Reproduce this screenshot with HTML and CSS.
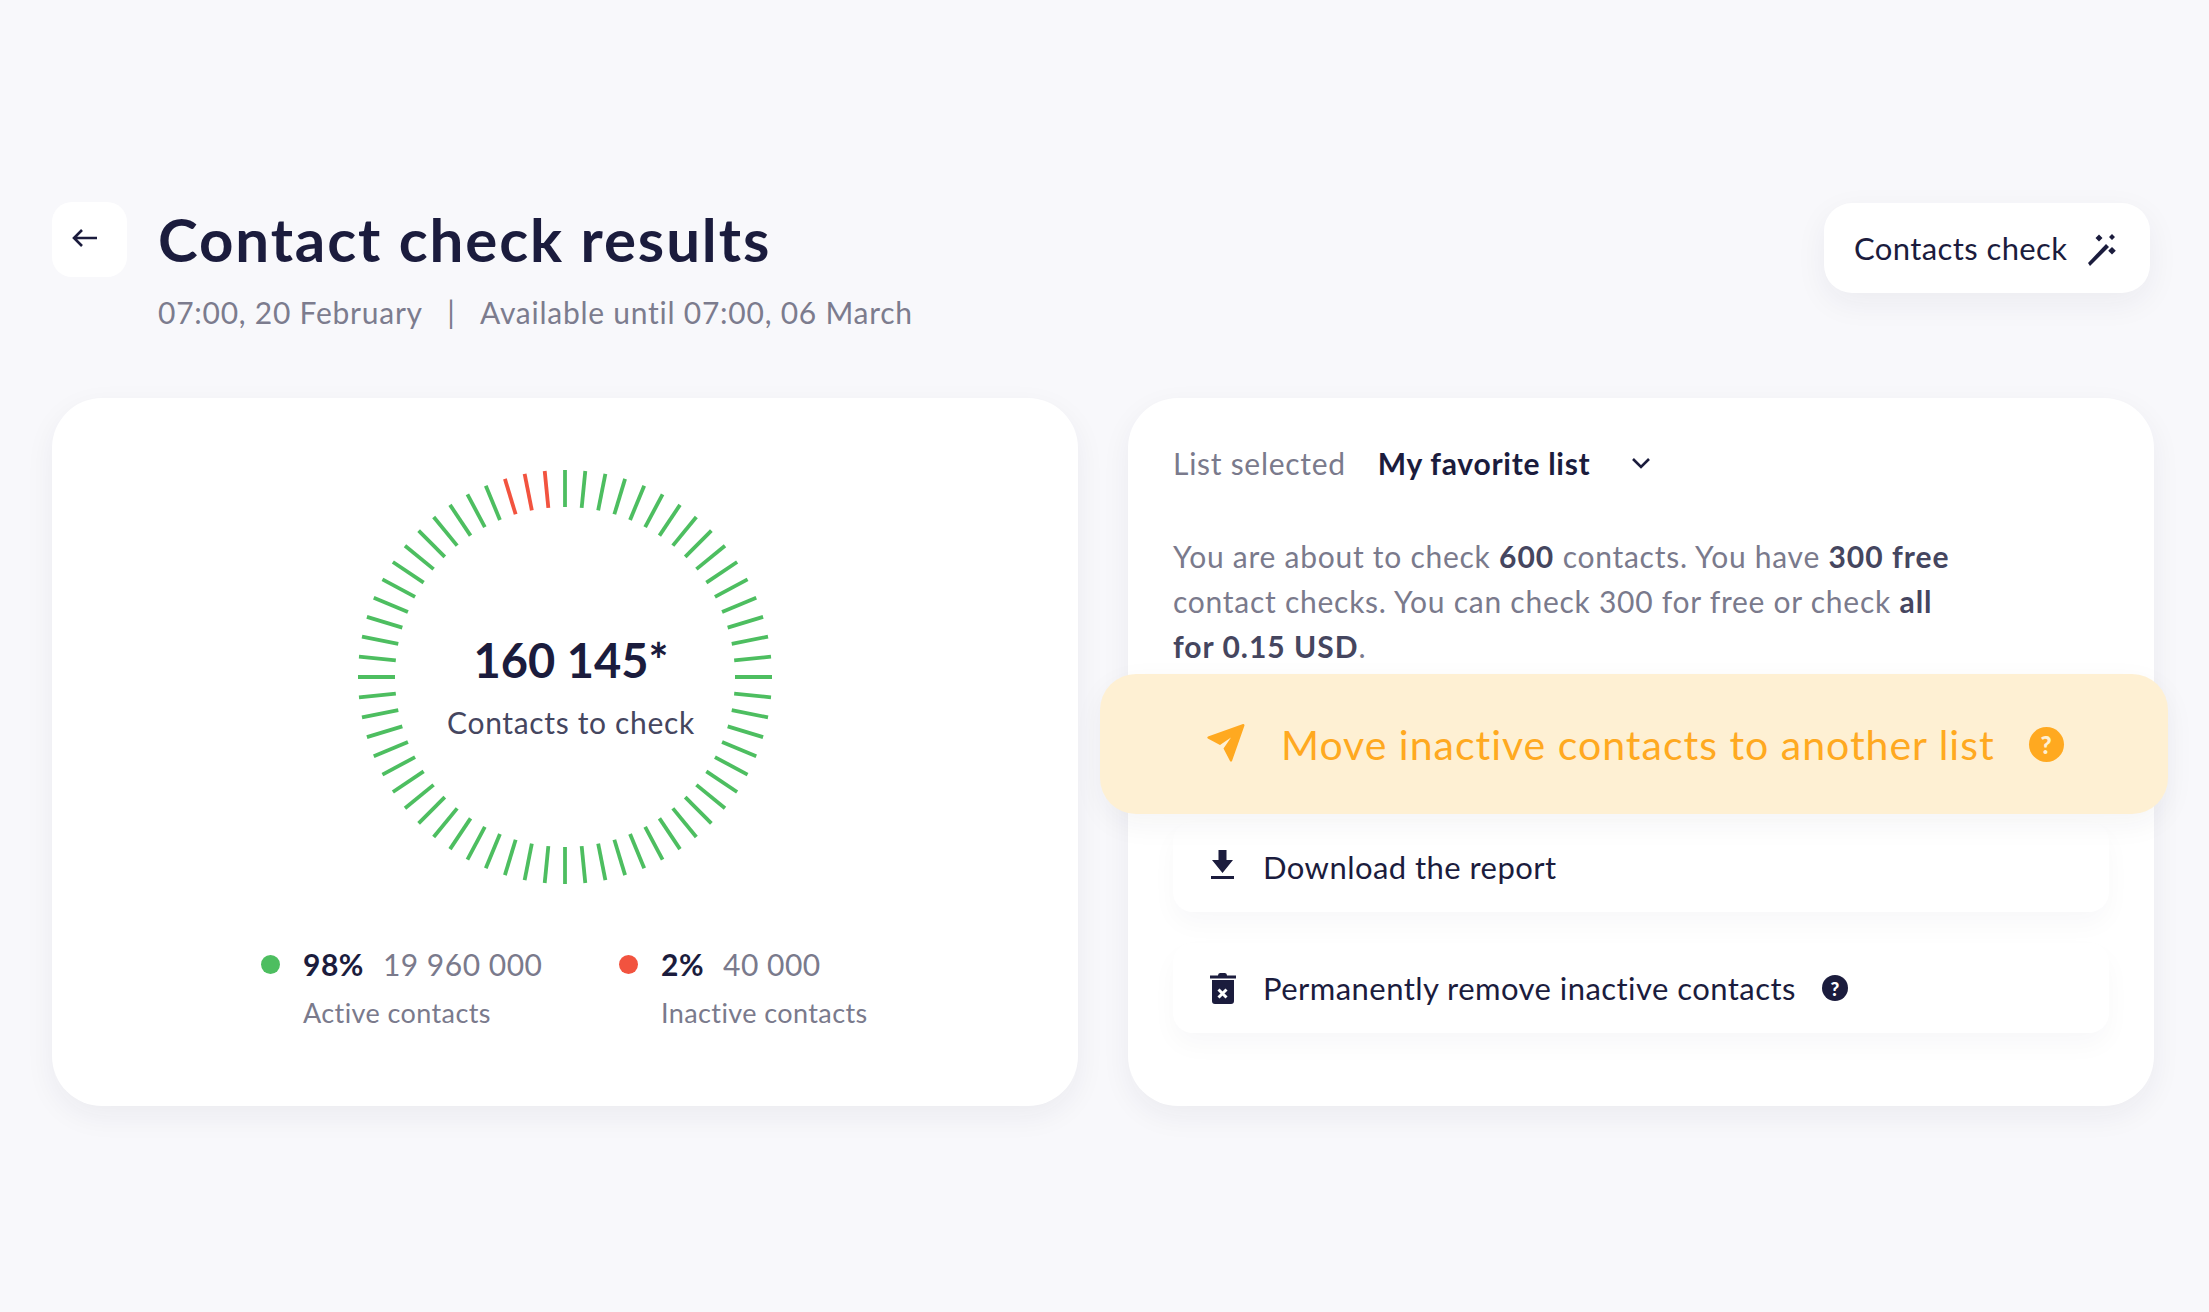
FILE: index.html
```html
<!DOCTYPE html>
<html lang="en">

<head>
    <meta charset="UTF-8">
    <title>Contact check results</title>
    <link rel="stylesheet" href="styles.css">
</head>

<body>
    <div class="page-head">
        <button class="back-btn">
            <svg width="26" height="20" viewBox="0 0 26 20"><path class="line-icon" d="M25 10H2M10 2l-8 8 8 8"/></svg>
        </button>
        <div class="title-box">
            <h1>Contact check results</h1>
            <p class="subtitle">07:00, 20 February<span class="sep">|</span>Available until 07:00, 06 March</p>
        </div>
        <button class="check-btn">
            Contacts check
            <svg width="45" height="45" viewBox="0 0 45 45">
                <path class="fill-dark" d="M8 37l18-19 3 3-19 19z"/>
                <path class="fill-dark" d="M19 8.500l3.500 3.500-3.500 3.500-3.500-3.500zM32 8l3 3-3 3-3-3zM32 21l3.800 3.800-3.800 3.800-3.800-3.800z"/>
            </svg>
        </button>
    </div>

    <div class="cards">
        <div class="card ring-card">
            <div class="ring-wrap">
                <svg class="ring" width="420" height="420" viewBox="-210 -210 420 420">
                    <defs><line id="tick" x1="0" y1="-207" x2="0" y2="-170"/></defs>
                    <g class="ticks-green">
                        <use href="#tick"/>
                        <use href="#tick" transform="rotate(5.625)"/>
                        <use href="#tick" transform="rotate(11.25)"/>
                        <use href="#tick" transform="rotate(16.875)"/>
                        <use href="#tick" transform="rotate(22.5)"/>
                        <use href="#tick" transform="rotate(28.125)"/>
                        <use href="#tick" transform="rotate(33.75)"/>
                        <use href="#tick" transform="rotate(39.375)"/>
                        <use href="#tick" transform="rotate(45)"/>
                        <use href="#tick" transform="rotate(50.625)"/>
                        <use href="#tick" transform="rotate(56.25)"/>
                        <use href="#tick" transform="rotate(61.875)"/>
                        <use href="#tick" transform="rotate(67.5)"/>
                        <use href="#tick" transform="rotate(73.125)"/>
                        <use href="#tick" transform="rotate(78.75)"/>
                        <use href="#tick" transform="rotate(84.375)"/>
                        <use href="#tick" transform="rotate(90)"/>
                        <use href="#tick" transform="rotate(95.625)"/>
                        <use href="#tick" transform="rotate(101.25)"/>
                        <use href="#tick" transform="rotate(106.875)"/>
                        <use href="#tick" transform="rotate(112.5)"/>
                        <use href="#tick" transform="rotate(118.125)"/>
                        <use href="#tick" transform="rotate(123.75)"/>
                        <use href="#tick" transform="rotate(129.375)"/>
                        <use href="#tick" transform="rotate(135)"/>
                        <use href="#tick" transform="rotate(140.625)"/>
                        <use href="#tick" transform="rotate(146.25)"/>
                        <use href="#tick" transform="rotate(151.875)"/>
                        <use href="#tick" transform="rotate(157.5)"/>
                        <use href="#tick" transform="rotate(163.125)"/>
                        <use href="#tick" transform="rotate(168.75)"/>
                        <use href="#tick" transform="rotate(174.375)"/>
                        <use href="#tick" transform="rotate(180)"/>
                        <use href="#tick" transform="rotate(185.625)"/>
                        <use href="#tick" transform="rotate(191.25)"/>
                        <use href="#tick" transform="rotate(196.875)"/>
                        <use href="#tick" transform="rotate(202.5)"/>
                        <use href="#tick" transform="rotate(208.125)"/>
                        <use href="#tick" transform="rotate(213.75)"/>
                        <use href="#tick" transform="rotate(219.375)"/>
                        <use href="#tick" transform="rotate(225)"/>
                        <use href="#tick" transform="rotate(230.625)"/>
                        <use href="#tick" transform="rotate(236.25)"/>
                        <use href="#tick" transform="rotate(241.875)"/>
                        <use href="#tick" transform="rotate(247.5)"/>
                        <use href="#tick" transform="rotate(253.125)"/>
                        <use href="#tick" transform="rotate(258.75)"/>
                        <use href="#tick" transform="rotate(264.375)"/>
                        <use href="#tick" transform="rotate(270)"/>
                        <use href="#tick" transform="rotate(275.625)"/>
                        <use href="#tick" transform="rotate(281.25)"/>
                        <use href="#tick" transform="rotate(286.875)"/>
                        <use href="#tick" transform="rotate(292.5)"/>
                        <use href="#tick" transform="rotate(298.125)"/>
                        <use href="#tick" transform="rotate(303.75)"/>
                        <use href="#tick" transform="rotate(309.375)"/>
                        <use href="#tick" transform="rotate(315)"/>
                        <use href="#tick" transform="rotate(320.625)"/>
                        <use href="#tick" transform="rotate(326.25)"/>
                        <use href="#tick" transform="rotate(331.875)"/>
                        <use href="#tick" transform="rotate(337.5)"/>
                    </g>
                    <g class="ticks-red">
                        <use href="#tick" transform="rotate(343.125)"/>
                        <use href="#tick" transform="rotate(348.75)"/>
                        <use href="#tick" transform="rotate(354.375)"/>
                    </g>
                </svg>
                <div class="ring-label">
                    <div class="ring-count">160 145*</div>
                    <div class="ring-text">Contacts to check</div>
                </div>
            </div>
            <div class="legend">
                <div class="legend-item">
                    <span class="dot dot-green"></span>
                    <div>
                        <div class="legend-top"><b>98%</b><span>19 960 000</span></div>
                        <div class="legend-name">Active contacts</div>
                    </div>
                </div>
                <div class="legend-item">
                    <span class="dot dot-red"></span>
                    <div>
                        <div class="legend-top"><b>2%</b><span>40 000</span></div>
                        <div class="legend-name">Inactive contacts</div>
                    </div>
                </div>
            </div>
        </div>

        <div class="card action-card">
            <div class="list-row">
                <span class="list-label">List selected</span>
                <span class="list-name">My favorite list</span>
                <svg width="22" height="14" viewBox="0 0 22 14"><path class="line-icon" d="M3 3l8 8 8-8"/></svg>
            </div>
            <p class="summary">You are about to check <b>600</b> contacts. You have <b>300 free</b><br>contact checks. You can check 300 for free or check <b>all</b><br><b>for 0.15 USD</b>.</p>
            <div class="move-banner">
                <svg width="60" height="60" viewBox="0 0 60 60">
                    <path class="fill-orange" d="M48 10L13 22.500q-1.500 1-.2 2L25 31l11-7.500-7.500 11L35 47q1 1.500 2 0l12.500-35.500q0-2-1.500-1.500z"/>
                </svg>
                <span>Move inactive contacts to another list</span>
                <span class="help help-orange">?</span>
            </div>
            <div class="action-row">
                <svg width="45" height="45" viewBox="0 0 45 45">
                    <path class="fill-dark" d="M18.500 5h8v10H33L22.500 28 12 15h6.500zM11 31h23v3H11z"/>
                </svg>
                <span>Download the report</span>
            </div>
            <div class="action-row">
                <svg width="45" height="45" viewBox="0 0 45 45">
                    <path class="fill-dark" d="M18 9.500q0-2.500 2-2.500h5q2 0 2 2.500h9v3H10v-3zM12 14h22v21q0 3-3 3H15q-3 0-3-3z"/>
                    <path class="cross" d="M18.500 23.500l8 8M26.500 23.500l-8 8"/>
                </svg>
                <span>Permanently remove inactive contacts</span>
                <span class="help help-dark">?</span>
            </div>
        </div>
    </div>
</body>

</html>
```

FILE: styles.css
```css
* {
    box-sizing: border-box;
}

body {
    margin: 0;
    min-height: 100vh;
    padding: 202px 55px 0 52px;
    background: #f8f8fb;
    color: #1b1c3d;
    font-family: 'Lato', 'Open Sans', sans-serif;
}

button {
    border: 0;
    background: #fff;
    color: inherit;
    font: inherit;
}

.line-icon {
    fill: none;
    stroke: #1b1c3d;
    stroke-width: 2.6;
}

.fill-dark {
    fill: #1b1c3d;
}

.fill-orange {
    fill: #ffa920;
}

.cross {
    fill: none;
    stroke: #fff;
    stroke-width: 3;
}

/* header */
.page-head {
    display: flex;
    align-items: flex-start;
    margin-bottom: 64px;
}

.back-btn {
    width: 75px;
    height: 75px;
    border-radius: 20px;
    padding: 0 9px 4px 0;
    margin-right: 31px;
    display: flex;
    align-items: center;
    justify-content: center;
}

.title-box {
    flex: 1;
    margin-top: -1px;
}

h1 {
    margin: 0;
    font-size: 60px;
    line-height: 76px;
    font-weight: 700;
    letter-spacing: 1.9px;
}

.subtitle {
    margin: 13px 0 0;
    font-size: 30px;
    line-height: 44px;
    color: #7c7c8e;
    letter-spacing: 0.75px;
}

.sep {
    margin: 0 24.500px;
}

.check-btn {
    width: 326px;
    height: 90px;
    margin: 1px 4px 0 0;
    padding: 0 25px 0 30px;
    border-radius: 28px;
    font-size: 31px;
    letter-spacing: 0.4px;
    display: flex;
    align-items: center;
    justify-content: space-between;
    box-shadow: 0 10px 32px rgba(30, 30, 60, 0.06);
}

/* cards */
.cards {
    display: grid;
    grid-template-columns: 1026px 1026px;
    gap: 50px;
}

.card {
    height: 708px;
    background: #fff;
    border-radius: 50px;
    box-shadow: 0 10px 30px rgba(30, 30, 60, 0.06);
}

.ring-card {
    padding-top: 69px;
}

.ring-wrap {
    position: relative;
    width: 420px;
    height: 420px;
    margin: 0 auto;
}

.ring {
    display: block;
}

.ticks-green {
    stroke: #4dbe60;
    stroke-width: 3.8;
}

.ticks-red {
    stroke: #f2533f;
    stroke-width: 3.8;
}

.ring-label {
    position: absolute;
    inset: 0;
    padding: 26px 0 0 12px;
    display: flex;
    flex-direction: column;
    align-items: center;
    justify-content: center;
}

.ring-count {
    font-size: 47px;
    line-height: 56px;
    font-weight: 700;
    margin-top: -7px;
}

.ring-text {
    font-size: 30px;
    line-height: 40px;
    color: #45465f;
    margin-top: 14px;
    letter-spacing: 0.66px;
}

.legend {
    display: grid;
    grid-template-columns: 358px auto;
    margin: 57px 0 0 209px;
}

.legend-item {
    display: flex;
    align-items: flex-start;
    gap: 23px;
}

.dot {
    width: 19px;
    height: 19px;
    margin-top: 11px;
    border-radius: 50%;
}

.dot-green {
    background: #4dbe60;
}

.dot-red {
    background: #f2533f;
}

.legend-top {
    display: flex;
    gap: 19px;
    font-size: 30px;
    line-height: 40px;
    color: #7a7a8c;
    letter-spacing: 0.5px;
}

.legend-top b {
    color: #1b1c3d;
    font-weight: 700;
}

.legend-name {
    margin-top: 9px;
    font-size: 27px;
    line-height: 40px;
    color: #7a7a8c;
    letter-spacing: 0.4px;
}

.action-card {
    padding: 45px 45px 0;
}

.list-row {
    display: flex;
    align-items: center;
    height: 40px;
    font-size: 30px;
    letter-spacing: 0.72px;
}

.list-label {
    color: #7a7a8c;
    margin-right: 32px;
}

.list-name {
    font-weight: 700;
    margin-right: 40px;
}

.summary {
    margin: 51px 0 5px;
    font-size: 30px;
    line-height: 45px;
    color: #7a7a8c;
    letter-spacing: 0.74px;
}

.summary b {
    color: #45465f;
    font-weight: 700;
    letter-spacing: 1px;
}

.move-banner {
    position: relative;
    display: flex;
    align-items: center;
    height: 140px;
    margin: 0 -59px 0 -73px;
    padding-left: 95px;
    border-radius: 36px;
    background: #fef0d3;
    color: #ffa920;
    font-size: 41px;
    letter-spacing: 1px;
    box-shadow: 0 10px 30px rgba(30, 30, 60, 0.05);
}

.move-banner svg {
    margin-right: 26px;
}

.help {
    display: flex;
    align-items: center;
    justify-content: center;
    border-radius: 50%;
    font-weight: 900;
    letter-spacing: 0;
}

.help-orange {
    width: 35px;
    height: 35px;
    margin-left: 34px;
    background: #ffa920;
    color: #fef0d3;
    font-size: 24px;
}

.help-dark {
    width: 26px;
    height: 26px;
    margin-left: 26px;
    background: #1b1c3d;
    color: #fff;
    font-size: 19px;
}

.action-row {
    display: flex;
    align-items: center;
    height: 90px;
    margin-top: 31px;
    padding-left: 27px;
    border-radius: 20px;
    font-size: 31px;
    letter-spacing: 0.45px;
    box-shadow: 0 12px 26px rgba(30, 30, 60, 0.03);
}

.move-banner + .action-row {
    margin-top: 8px;
}

.action-row svg {
    margin-right: 18px;
}
```
